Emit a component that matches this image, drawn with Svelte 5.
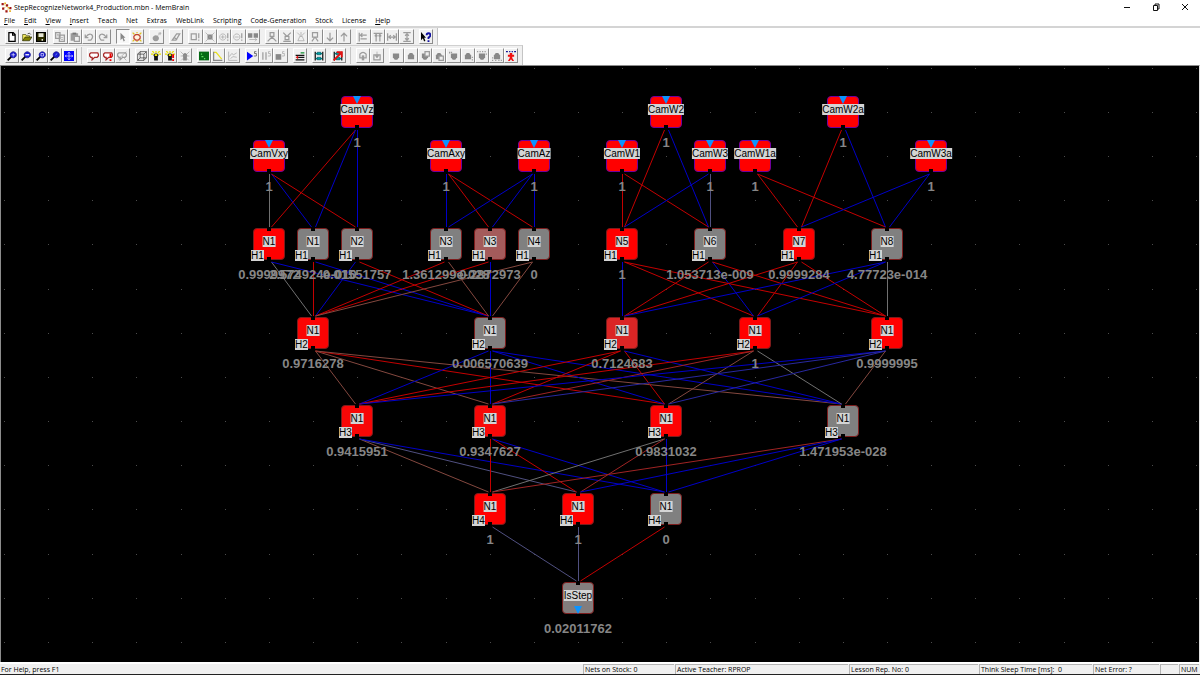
<script lang="ts">
  interface Shape {
    d: string;
    fill?: string;
    stroke?: string;
    width?: number;
  }

  interface Tool {
    label: string;
    icon: string;
    disabled?: boolean;
    pressed?: boolean;
  }

  interface Neuron {
    id: string;
    name: string;
    col: number;
    row: number;
    value: string;
    layer?: string;
    kind?: 'input' | 'output';
  }

  const PITCH = 44.15;
  const GRAY = '#9c9c9c';

  const menus = [
    ['F', 'ile'],
    ['E', 'dit'],
    ['V', 'iew'],
    ['I', 'nsert'],
    ['', 'Teach'],
    ['', 'Net'],
    ['', 'Extras'],
    ['', 'WebLink'],
    ['', 'Scripting'],
    ['', 'Code-Generation'],
    ['', 'Stock'],
    ['', 'License'],
    ['H', 'elp'],
  ];

  const lens: Shape[] = [
    { d: 'M1 15l6-6', stroke: '#000', width: 3 },
    { d: 'M10 1a5 5 0 1 0 .1 0z', fill: '#1a1ad0', stroke: '#000080', width: 1 },
  ];
  const bubble = 'M3 3h11l1 2v3l-2 2H9l-4 4V10H3L1 8V5z';
  const bulb: Shape[] = [
    { d: 'M8 0v3M0 5h4M12 5h4M2 0l3 3M14 0l-3 3', stroke: '#e8e000', width: 2 },
    { d: 'M8 4a3 3 0 0 1 3 5v6H5V9a3 3 0 0 1 3-5z', fill: '#111' },
    { d: 'M6 5h4v3H6z', fill: '#f0e800' },
  ];
  const net: Shape[] = [
    { d: 'M2 1v14M14 1v14', stroke: '#111', width: 2 },
    { d: 'M3 4h10M3 12h10', stroke: '#008888', width: 2 },
    { d: 'M5 2h6v4H5zM5 10h6v4H5z', fill: '#00a0a0', stroke: '#005060', width: 1 },
  ];
  const shield = 'M3 4h10v6l-3 4H6l-3-4z';
  const jar = 'M3 13V7l3-4h4l3 4v6z';
  const letterS: Shape = { d: 'M15 1h-3v3h3v4h-4', stroke: '#333', width: 1 };
  const letterSOff: Shape = { d: 'M15 1h-3v3h3v4h-4', stroke: GRAY, width: 1 };
  const bang: Shape = { d: 'M14 2v8M14 12v2', stroke: GRAY, width: 2 };

  const icons: Record<string, Shape[]> = {
    new: [{ d: 'M3 1h7l3 3v11H3zM9 1v4h4', fill: '#fff', stroke: '#000', width: 2 }],
    open: [
      { d: 'M1 14V4h5l1 2h5v3', fill: '#f4ec60', stroke: '#333300', width: 1 },
      { d: 'M1 14l4-6h11l-4 6z', fill: '#808000', stroke: '#222200', width: 1 },
      { d: 'M9 3q3-3 5 1', stroke: '#000', width: 1 },
    ],
    save: [
      { d: 'M1 1h14v14H1z', fill: '#303000', stroke: '#000', width: 2 },
      { d: 'M4 2h8v6H4z', fill: '#e8e8d8' },
      { d: 'M9 11h2v3H9z', fill: '#fff' },
    ],
    copy: [
      { d: 'M1 1h7v9H1zM7 5h8v10H7z', fill: '#eee', stroke: GRAY, width: 2 },
      { d: 'M3 4h3M3 6h3M9 9h4M9 12h4', stroke: GRAY, width: 1 },
    ],
    paste: [
      { d: 'M1 2h12v12H1z', fill: GRAY },
      { d: 'M4 1h6v3H4z', fill: '#777' },
      { d: 'M7 7h8v8H7z', fill: '#eee', stroke: GRAY, width: 2 },
    ],
    undo: [{ d: 'M2 4v5h5M3 8q4-6 9-4q4 4-1 9H6', stroke: GRAY, width: 2 }],
    redo: [{ d: 'M14 4v5H9M13 8q-4-6-9-4q-4 4 1 9h5', stroke: GRAY, width: 2 }],
    pointer: [{ d: 'M4 1l8 8H9l2 5-2 1-2-5-3 3z', fill: '#888' }],
    neuron: [
      { d: 'M1 1l3 3M15 1l-3 3M1 15l3-3M15 15l-3-3M8 0v2M8 14v2', stroke: '#e0c020', width: 2 },
      { d: 'M6 4h4l3 3v3l-3 3H6l-3-3V7z', fill: '#fff4e0', stroke: '#c04030', width: 2 },
    ],
    bomb: [
      { d: 'M6 5a5 5 0 1 0 .1 0z', fill: GRAY },
      { d: 'M9 6l3-3M10 2h5M13 0v5', stroke: GRAY, width: 1 },
    ],
    eraser: [{ d: 'M2 13L9 3h5l-6 10zM5 9l5 3', stroke: GRAY, width: 2 }],
    boxAlert: [{ d: 'M2 3h8v9H2z', stroke: GRAY, width: 2 }, bang],
    boxFill: [
      { d: 'M4 4h8v8H4z', fill: '#888' },
      { d: 'M1 1l14 14M15 1L1 15', stroke: GRAY, width: 1 },
    ],
    plusAlert: [{ d: 'M6 3a5 5 0 1 0 .1 0zM3 8h6M6 5v6', stroke: GRAY, width: 1 }, bang],
    minusAlert: [{ d: 'M6 3a5 5 0 1 0 .1 0zM3 8h6', stroke: GRAY, width: 1 }, bang],
    boxes: [
      { d: 'M0 2h7v7H0zM9 2h7v7H9z', fill: '#888' },
      { d: 'M2 12h12M11 10l3 2-3 3', stroke: GRAY, width: 1 },
    ],
    treeTop: [{ d: 'M5 1h6v6H5zM8 7v4M1 15l7-7 7 7', stroke: GRAY, width: 2 }],
    treeIn: [{ d: 'M2 1l6 6 6-6M5 7h6v5H5zM2 15h12', stroke: GRAY, width: 2 }],
    treeCross: [{ d: 'M2 1l6 6 6-6M6 7h4l3 7H3zM8 0v5', stroke: GRAY, width: 1 }],
    treeOut: [{ d: 'M4 1h8v7H4zM8 8L3 15M8 8l5 7', stroke: GRAY, width: 2 }],
    down: [{ d: 'M8 1v13M3 9l5 5 5-5', stroke: GRAY, width: 2 }],
    up: [{ d: 'M8 15V2M3 7l5-5 5 5', stroke: GRAY, width: 2 }],
    alignLeft: [{ d: 'M2 1v14M4 5h10M4 11h10M7 2L4 5l3 3', stroke: GRAY, width: 2 }],
    alignTop: [{ d: 'M1 2h14M5 4v11M11 4v11M3 7l2-3 2 3M9 7l2-3 2 3', stroke: GRAY, width: 2 }],
    spreadX: [{ d: 'M1 2v12M15 2v12M3 8h10M6 5L3 8l3 3M10 5l3 3-3 3', stroke: GRAY, width: 2 }],
    spreadY: [{ d: 'M2 1h12M2 15h12M8 3v10M5 6l3-3 3 3M5 10l3 3 3-3', stroke: GRAY, width: 2 }],
    help: [
      { d: 'M0 0l8 9H5l2 5-2 1-2-5-3 3z', fill: '#000' },
      { d: 'M9 5q0-3 3-3t3 3q0 2-3 4v2M12 13v3', stroke: '#1010a0', width: 3 },
    ],
    zoomIn: [...lens, { d: 'M7 6h6M10 3v6', stroke: '#fff', width: 1 }],
    zoomOut: [...lens, { d: 'M7 6h6', stroke: '#fff', width: 2 }],
    zoomWin: [...lens, { d: 'M8 4h4v4H8z', stroke: '#fff', width: 1 }],
    zoomNet: [...lens, { d: 'M9 7l2-3', stroke: '#9ad0ff', width: 1 }],
    fit: [
      { d: 'M0 0h16v16H0z', fill: '#0000ff' },
      { d: 'M8 2v12M2 8h12M6 4l2-2 2 2M6 12l2 2 2-2M4 6L2 8l2 2M12 6l2 2-2 2', stroke: '#fff', width: 1 },
    ],
    teach: [{ d: bubble, fill: '#fff', stroke: '#a82828', width: 2 }],
    teachAlert: [
      { d: bubble, fill: '#fff', stroke: '#a82828', width: 2 },
      { d: 'M12 4v7M12 13v3', stroke: '#f00000', width: 3 },
    ],
    teachOff: [
      { d: bubble, stroke: GRAY, width: 2 },
      { d: 'M1 14L15 1M8 8l7 7', stroke: GRAY, width: 1 },
    ],
    cube: [{ d: 'M1 5h10v10H1zM1 5l4-4h10v10l-4 4M11 5l4-4M5 1v10h10M5 11l-4 4', stroke: '#222', width: 1 }],
    bulb,
    bulbAlert: [...bulb, { d: 'M13 5v6M13 13v3', stroke: '#f00000', width: 3 }],
    bulbOff: [
      { d: 'M8 3a4 4 0 0 1 3 6v6H5V9a4 4 0 0 1 3-6z', fill: '#888' },
      { d: 'M1 1l4 4M15 1l-4 4M1 8h14M2 15l4-4M14 15l-4-4', stroke: GRAY, width: 1 },
    ],
    board: [
      { d: 'M0 1h16v14H0z', fill: '#046a14' },
      { d: 'M3 5h2M4 9h3M8 12h2', stroke: '#60e060', width: 2 },
    ],
    chart: [
      { d: 'M1 2h4l9 11', stroke: '#e8e020', width: 2 },
      { d: 'M1 1v14h14', stroke: '#888', width: 2 },
    ],
    chartOff: [{ d: 'M1 1v14h14M2 9l4-5 3 2 5-3M4 12l4-3 6 1', stroke: GRAY, width: 1 }],
    play: [{ d: 'M0 1l10 7-10 7z', fill: '#0000ff' }, letterS],
    pause: [{ d: 'M3 2v12M8 2v12', stroke: GRAY, width: 2 }, letterSOff],
    stop: [{ d: 'M1 5h9v9H1z', fill: '#888' }, letterSOff],
    lesson: [
      { d: 'M1 7h14M1 14h14M5 10h10', stroke: '#111', width: 2 },
      { d: 'M9 3h6', stroke: '#109030', width: 2 },
      { d: 'M1 10l4-3v6z', fill: '#e01010' },
    ],
    net,
    netAlert: [...net, { d: 'M1 15L12 4M6 2h8v8', stroke: '#e81010', width: 3 }],
    lock: [
      { d: 'M3 5q5-6 10 0v6H3z', stroke: GRAY, width: 2 },
      { d: 'M6 7h4v8H6z', fill: GRAY },
    ],
    bag: [
      { d: 'M3 6h10v8H3z', stroke: GRAY, width: 2 },
      { d: 'M8 1v8M5 7l3 4 3-4z', fill: GRAY, stroke: GRAY, width: 1 },
    ],
    shield: [{ d: shield, fill: '#888' }],
    jar: [{ d: jar, fill: '#888' }],
    shieldBox: [{ d: shield, fill: '#888' }, { d: 'M8 1h7v7H8z', fill: '#eee', stroke: GRAY, width: 2 }],
    jarBox: [{ d: jar, fill: '#888' }, { d: 'M8 8h7v7H8z', fill: '#eee', stroke: GRAY, width: 2 }],
    shieldDots: [{ d: shield, fill: '#888' }, { d: 'M1 1v3M4 1v2', stroke: GRAY, width: 2 }],
    jarDots: [{ d: jar, fill: '#888' }, { d: 'M15 9v2M15 13v2', stroke: GRAY, width: 2 }],
    shieldRow: [{ d: shield, fill: '#888' }, { d: 'M0 1h2M4 1h2M8 1h2M12 1h2M15 4v2', stroke: GRAY, width: 2 }],
    jarRow: [{ d: jar, fill: '#888' }, { d: 'M0 15h2M5 15h2M10 15h2M14 15h2M1 10v2', stroke: GRAY, width: 2 }],
    figure: [
      { d: 'M0 1h3M5 1h2M9 1h2M13 1h3', stroke: '#101090', width: 2 },
      { d: 'M6 3h4v3h3v3h-3v2l3 5h-3l-2-3-2 3H3l3-5V9H3V6h3z', fill: '#f01010' },
    ],
  };

  function off(...names: string[]): Tool[] {
    return names.map((icon) => ({ icon, label: icon, disabled: true }));
  }

  function on(...names: string[]): Tool[] {
    return names.map((icon) => ({ icon, label: icon }));
  }

  const mainTools: Tool[][] = [
    on('new', 'open', 'save'),
    off('copy', 'paste', 'undo', 'redo'),
    [{ icon: 'pointer', label: 'pointer', pressed: true }, ...on('neuron')],
    off('bomb'),
    off('eraser'),
    off('boxAlert', 'boxFill', 'plusAlert', 'minusAlert', 'boxes'),
    off('treeTop', 'treeIn', 'treeCross', 'treeOut', 'down', 'up'),
    off('alignLeft', 'alignTop', 'spreadX', 'spreadY'),
    on('help'),
  ];

  const netTools: Tool[][] = [
    on('zoomIn', 'zoomOut', 'zoomWin', 'zoomNet', 'fit'),
    [],
    [...on('teach', 'teachAlert'), ...off('teachOff')],
    [...on('cube', 'bulb', 'bulbAlert'), ...off('bulbOff')],
    [...on('board', 'chart'), ...off('chartOff')],
    [...on('play'), ...off('pause', 'stop')],
    on('lesson'),
    on('net'),
    on('netAlert'),
    [],
    off('lock', 'bag'),
    [
      ...off('shield', 'jar', 'shieldBox', 'jarBox', 'shieldDots', 'jarDots', 'shieldRow', 'jarRow'),
      ...on('figure'),
    ],
  ];

  const neurons: Neuron[] = [
    { id: 'vz', name: 'CamVz', col: 8, row: 0, value: '1', kind: 'input' },
    { id: 'w2', name: 'CamW2', col: 15, row: 0, value: '1', kind: 'input' },
    { id: 'w2a', name: 'CamW2a', col: 19, row: 0, value: '1', kind: 'input' },
    { id: 'vxy', name: 'CamVxy', col: 6, row: 1, value: '1', kind: 'input' },
    { id: 'axy', name: 'CamAxy', col: 10, row: 1, value: '1', kind: 'input' },
    { id: 'az', name: 'CamAz', col: 12, row: 1, value: '1', kind: 'input' },
    { id: 'w1', name: 'CamW1', col: 14, row: 1, value: '1', kind: 'input' },
    { id: 'w3', name: 'CamW3', col: 16, row: 1, value: '1', kind: 'input' },
    { id: 'w1a', name: 'CamW1a', col: 17, row: 1, value: '1', kind: 'input' },
    { id: 'w3a', name: 'CamW3a', col: 21, row: 1, value: '1', kind: 'input' },
    { id: 'a6', name: 'N1', col: 6, row: 3, value: '0.9999972', layer: 'H1' },
    { id: 'a7', name: 'N1', col: 7, row: 3, value: '2.574924e-010', layer: 'H1' },
    { id: 'a8', name: 'N2', col: 8, row: 3, value: '0.01551757', layer: 'H1' },
    { id: 'a10', name: 'N3', col: 10, row: 3, value: '1.361299e-028', layer: 'H1' },
    { id: 'a11', name: 'N3', col: 11, row: 3, value: '0.2872973', layer: 'H1' },
    { id: 'a12', name: 'N4', col: 12, row: 3, value: '0', layer: 'H1' },
    { id: 'a14', name: 'N5', col: 14, row: 3, value: '1', layer: 'H1' },
    { id: 'a16', name: 'N6', col: 16, row: 3, value: '1.053713e-009', layer: 'H1' },
    { id: 'a18', name: 'N7', col: 18, row: 3, value: '0.9999284', layer: 'H1' },
    { id: 'a20', name: 'N8', col: 20, row: 3, value: '4.77723e-014', layer: 'H1' },
    { id: 'b7', name: 'N1', col: 7, row: 5, value: '0.9716278', layer: 'H2' },
    { id: 'b11', name: 'N1', col: 11, row: 5, value: '0.006570639', layer: 'H2' },
    { id: 'b14', name: 'N1', col: 14, row: 5, value: '0.7124683', layer: 'H2' },
    { id: 'b17', name: 'N1', col: 17, row: 5, value: '1', layer: 'H2' },
    { id: 'b20', name: 'N1', col: 20, row: 5, value: '0.9999995', layer: 'H2' },
    { id: 'c8', name: 'N1', col: 8, row: 7, value: '0.9415951', layer: 'H3' },
    { id: 'c11', name: 'N1', col: 11, row: 7, value: '0.9347627', layer: 'H3' },
    { id: 'c15', name: 'N1', col: 15, row: 7, value: '0.9831032', layer: 'H3' },
    { id: 'c19', name: 'N1', col: 19, row: 7, value: '1.471953e-028', layer: 'H3' },
    { id: 'd11', name: 'N1', col: 11, row: 9, value: '1', layer: 'H4' },
    { id: 'd13', name: 'N1', col: 13, row: 9, value: '1', layer: 'H4' },
    { id: 'd15', name: 'N1', col: 15, row: 9, value: '0', layer: 'H4' },
    { id: 'out', name: 'IsStep', col: 13, row: 11, value: '0.02011762', kind: 'output' },
  ];

  // r/b: strong positive/negative weight, the rest fade towards gray near zero
  const weightColors: Record<string, string> = {
    r: '#c40000',
    b: '#0000c8',
    d: '#a02424',
    n: '#84483f',
    g: '#707070',
    s: '#505080',
    i: '#2828a0',
  };

  const wiring: Record<string, string> = {
    vxy: 'a6:g a7:b a8:r',
    vz: 'a6:r a7:b a8:b',
    axy: 'a10:b a11:r a12:r',
    az: 'a10:b a11:b a12:b',
    w1: 'a14:r a16:r',
    w2: 'a14:r a16:b',
    w3: 'a14:b a16:s',
    w1a: 'a18:r a20:r',
    w2a: 'a18:r a20:b',
    w3a: 'a18:b a20:b',
    a6: 'b7:g b11:b',
    a7: 'b7:r b11:b',
    a8: 'b7:b b11:r',
    a10: 'b7:r b11:n',
    a11: 'b7:r b11:b',
    a12: 'b7:n b11:n',
    a14: 'b14:b b17:r b20:r',
    a16: 'b14:r b17:b b20:r',
    a18: 'b14:r b17:r b20:r',
    a20: 'b14:b b17:b b20:g',
    b7: 'c8:n c11:n c15:r c19:n',
    b11: 'c8:b c11:b c15:b c19:b',
    b14: 'c8:r c11:r c15:r c19:b',
    b17: 'c8:r c11:d c15:n c19:g',
    b20: 'c8:b c11:i c15:i c19:n',
    c8: 'd11:n d13:s d15:b',
    c11: 'd11:r d13:r d15:b',
    c15: 'd11:g d13:d d15:b',
    c19: 'd11:d d13:b d15:b',
    d11: 'out:s',
    d13: 'out:s',
    d15: 'out:r',
  };

  const status = [
    { text: 'Nets on Stock: 0', size: 'stock' },
    { text: 'Active Teacher: RPROP', size: 'teacher' },
    { text: 'Lesson Rep. No: 0', size: 'lesson' },
    { text: 'Think Sleep Time [ms]:  0', size: 'sleep' },
    { text: 'Net Error: ?', size: 'error' },
    { text: '', size: 'caps' },
    { text: 'NUM', size: 'num' },
  ];

  let width = $state(1200);
  let height = $state(597);

  const gridX = (col: number) => Math.round(3 + col * PITCH);
  const gridY = (row: number) => Math.round(46 + row * PITCH);

  const byId = Object.fromEntries(neurons.map((n) => [n.id, n]));

  const links = Object.entries(wiring).flatMap(([from, list]) =>
    list.split(' ').map((entry) => {
      const [to, weight] = entry.split(':');
      const a = byId[from];
      const b = byId[to];
      const shift = Math.sign(b.col - a.col) * 2;
      return {
        x1: gridX(a.col) + shift + 0.5,
        y1: gridY(a.row) + 18,
        x2: gridX(b.col) - shift + 0.5,
        y2: gridY(b.row) - 17,
        color: weightColors[weight],
      };
    }),
  );

  const dots = $derived.by(() => {
    const list: { x: number; y: number }[] = [];
    for (let row = -1; gridY(row) < height; row++) {
      for (let col = 0; gridX(col) < width; col++) {
        list.push({ x: gridX(col), y: gridY(row) });
      }
    }
    return list;
  });

  // gray at 0, pure red at 1
  function activation(value: string) {
    const v = Number(value);
    const other = Math.round(128 * (1 - v));
    return `rgb(${Math.round(128 + 127 * v)}, ${other}, ${other})`;
  }
</script>

{#snippet toolbar(groups: Tool[][], label: string, size: string)}
  <div class="toolbar toolbar--{size}" role="toolbar" aria-label={label}>
    {#each groups as group, g}
      {#if g > 0}
        <span class="toolbar__gap" class:toolbar__gap--line={group.length === 0}></span>
      {/if}
      {#each group as tool}
        <button
          type="button"
          class="tool"
          class:tool--pressed={tool.pressed}
          disabled={tool.disabled}
          aria-label={tool.label}
        >
          <svg class="tool__icon" viewBox="0 0 16 16" aria-hidden="true">
            {#each icons[tool.icon] as shape}
              <path
                d={shape.d}
                fill={shape.fill ?? 'none'}
                stroke={shape.stroke ?? 'none'}
                stroke-width={shape.width ?? 0}
              />
            {/each}
          </svg>
        </button>
      {/each}
    {/each}
  </div>
{/snippet}

<div class="window">
  <header class="titlebar">
    <svg class="titlebar__logo" viewBox="0 0 20 20" aria-hidden="true">
      <path d="M4 4l7 4M4 11l7-3M11 8l5 4M8 16l8-4" stroke="#e8c860" stroke-width="1" />
      <path d="M1 2h4v4H1zM9 4h4v4H9zM2 10h4v4H2zM15 9h4v4h-4zM8 15h4v4H8z" fill="#a01818" />
      <path d="M6 1h3v3H6zM12 9h3v3h-3zM15 15h3v3h-3z" fill="#e8b020" />
    </svg>
    <h1 class="titlebar__text">StepRecognizeNetwork4_Production.mbn - MemBrain</h1>
    <div class="titlebar__controls">
      <button type="button" class="control" aria-label="Minimize">
        <svg viewBox="0 0 8 8"><path d="M1 4.500h6" /></svg>
      </button>
      <button type="button" class="control" aria-label="Restore">
        <svg viewBox="0 0 8 8"><path d="M1.500 2.500h4v5h-4zM3 2.500v-1.500h4v5H6" /></svg>
      </button>
      <button type="button" class="control" aria-label="Close">
        <svg viewBox="0 0 8 8"><path d="M1 1l6 6M7 1L1 7" /></svg>
      </button>
    </div>
  </header>

  <nav class="menubar" aria-label="Main menu">
    {#each menus as [key, rest]}
      <button type="button" class="menubar__item">{#if key}<u>{key}</u>{/if}{rest}</button>
    {/each}
  </nav>

  {@render toolbar(mainTools, 'Editing', 'main')}
  {@render toolbar(netTools, 'Network', 'net')}

  <main class="canvas" bind:clientWidth={width} bind:clientHeight={height}>
    <svg class="canvas__links" aria-hidden="true">
      {#each dots as dot}
        <rect x={dot.x} y={dot.y} width="1" height="1" fill="#4c4c4c" />
      {/each}
      {#each links as link}
        <line x1={link.x1} y1={link.y1} x2={link.x2} y2={link.y2} stroke={link.color} />
      {/each}
    </svg>

    {#each neurons as n}
      <div
        class="neuron neuron--{n.kind ?? 'hidden'}"
        style:left="{gridX(n.col)}px"
        style:top="{gridY(n.row)}px"
      >
        <div class="neuron__body" style:background-color={activation(n.value)}></div>
        <span class="neuron__name">{n.name}</span>
        {#if n.layer}
          <span class="neuron__layer">{n.layer}</span>
        {/if}
        <span class="neuron__value">{n.value}</span>
      </div>
    {/each}
  </main>

  <footer class="statusbar">
    <span class="statusbar__help">For Help, press F1</span>
    {#each status as pane}
      <span class="statusbar__pane statusbar__pane--{pane.size}">{pane.text}</span>
    {/each}
  </footer>
</div>

<style>
  :global(body) {
    background: #fff;
  }

  .window {
    display: flex;
    flex-direction: column;
    box-sizing: border-box;
    min-height: 100vh;
    border-bottom: 1px solid #222;
    font-family: 'Open Sans', 'Noto Sans', sans-serif;
    font-size: 7px;
    color: #000;
  }

  button {
    margin: 0;
    padding: 0;
    border: 0;
    background: transparent;
    font: inherit;
    color: inherit;
  }

  .titlebar {
    display: flex;
    align-items: center;
    height: 14px;
    padding: 0 1px;
  }

  .titlebar__logo {
    width: 11px;
    height: 11px;
    margin-right: 2px;
  }

  .titlebar__text {
    flex: 1;
    margin: 0;
    font-size: 7px;
    font-weight: 400;
  }

  .titlebar__controls {
    display: flex;
  }

  .control {
    display: flex;
    align-items: center;
    justify-content: center;
    width: 29px;
    height: 14px;
  }

  .control svg {
    width: 8px;
    height: 8px;
    fill: none;
    stroke: #111;
    stroke-width: 1;
  }

  .menubar {
    display: flex;
    gap: 9px;
    height: 12px;
    padding-left: 4px;
    border-bottom: 2px solid #d4d4d4;
  }

  .menubar__item {
    line-height: 13px;
    white-space: nowrap;
  }

  .toolbar {
    display: flex;
    align-items: center;
    box-sizing: border-box;
    max-width: 100%;
    padding: 0 4px 0 5px;
    background: #f0f0f0;
    border-right: 1px solid #c4c4c4;
  }

  .toolbar--main {
    width: 438px;
    height: 17px;
  }

  .toolbar--net {
    width: 523px;
    height: 20px;
    border-top: 1px solid #d0d0d0;
  }

  .toolbar__gap {
    flex: none;
    box-sizing: border-box;
    width: 5px;
    height: 17px;
  }

  .toolbar__gap--line {
    border-right: 1px solid #c4c4c4;
  }

  .tool {
    display: flex;
    flex: 1;
    align-items: center;
    justify-content: center;
    box-sizing: border-box;
    min-width: 0;
    height: 15px;
    border: 1px solid;
    border-color: #fff #8c8c8c #8c8c8c #fff;
    background: #f0f0f0;
  }

  .tool--pressed {
    border-color: #8c8c8c #fff #fff #8c8c8c;
    background: #f8f8f8;
  }

  .tool__icon {
    flex: none;
    width: 10px;
    height: 10px;
  }

  .canvas {
    position: relative;
    flex: 1;
    overflow: hidden;
    min-height: 580px;
    border: 1px solid #8c8c8c;
    border-right-color: #e4e4e4;
    border-bottom: 0;
    background: #000;
    font-family: 'Liberation Sans', Arial, sans-serif;
  }

  .canvas__links {
    position: absolute;
    inset: 0;
    width: 100%;
    height: 100%;
  }

  .neuron {
    position: absolute;
    width: 0;
    height: 0;
  }

  .neuron__body {
    position: absolute;
    left: -16px;
    top: -16px;
    box-sizing: border-box;
    width: 32px;
    height: 32px;
    border: 1px solid #7c1c1c;
    border-radius: 4px;
  }

  .neuron--input .neuron__body {
    border-color: #70009c;
  }

  /* connector notches */
  .neuron__body::before,
  .neuron__body::after {
    content: '';
    position: absolute;
    left: 13px;
    width: 4px;
    height: 3px;
    background: #000;
  }

  .neuron__body::before {
    top: -1px;
  }

  .neuron__body::after {
    bottom: -1px;
  }

  .neuron--input .neuron__body::before,
  .neuron--output .neuron__body::after {
    left: 11px;
    width: 8px;
    height: 8px;
    background: #0c94ff;
    clip-path: polygon(0 0, 100% 0, 50% 100%);
  }

  .neuron__name,
  .neuron__layer {
    position: absolute;
    background: #d4d4d4;
    color: #000;
    font-size: 10px;
    line-height: 11px;
    white-space: nowrap;
  }

  .neuron__name {
    top: -8px;
    left: 0;
    transform: translateX(-50%);
  }

  .neuron__layer {
    top: 6px;
    left: -18px;
  }

  .neuron__value {
    position: absolute;
    top: 23px;
    left: 0;
    transform: translateX(-50%);
    color: #868686;
    font-size: 13px;
    font-weight: 700;
    line-height: 16px;
    white-space: nowrap;
  }

  .statusbar {
    display: flex;
    height: 10px;
    border-top: 2px solid #fff;
    background: #f0f0f0;
    line-height: 11px;
    white-space: pre;
  }

  .statusbar__help {
    flex: 1;
    padding-left: 1px;
  }

  .statusbar__pane {
    box-sizing: border-box;
    overflow: hidden;
    padding-left: 1px;
    border-left: 1px solid #b4b4b4;
    border-top: 1px solid #b4b4b4;
    margin-right: 1px;
    line-height: 10px;
  }

  .statusbar__pane--stock {
    width: 91px;
  }

  .statusbar__pane--teacher {
    width: 173px;
  }

  .statusbar__pane--lesson {
    width: 129px;
  }

  .statusbar__pane--sleep {
    width: 113px;
  }

  .statusbar__pane--error {
    width: 66px;
  }

  .statusbar__pane--caps {
    width: 18px;
  }

  .statusbar__pane--num {
    width: 20px;
  }
</style>
